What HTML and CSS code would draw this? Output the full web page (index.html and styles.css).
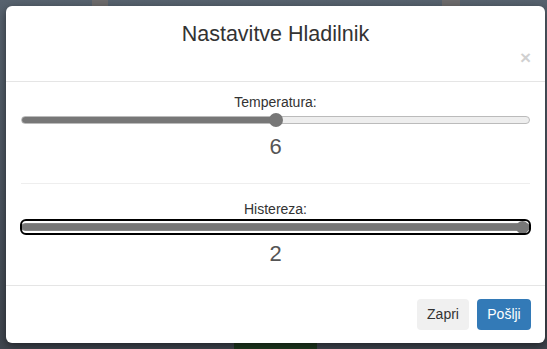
FILE: index.html
```html
<!DOCTYPE html>
<html lang="sl">

<head>
    <meta charset="UTF-8">
    <meta name="viewport" content="width=device-width, initial-scale=1.0">
    <title>Nastavitve Hladilnik</title>
    <link rel="stylesheet" href="styles.css">
</head>

<body>
    <div class="backdrop">
        <span class="patch patch-a"></span>
        <span class="patch patch-b"></span>
        <span class="patch patch-c"></span>
    </div>
    <div class="modal">
        <div class="modal-header">
            <h4 class="modal-title">Nastavitve Hladilnik</h4>
            <button class="close" type="button">&times;</button>
        </div>
        <div class="modal-body">
            <label class="field-label" for="temp">Temperatura:</label>
            <input class="slider" id="temp" type="range" min="0" max="12" value="6" style="--fill: 50%">
            <div class="field-value">6</div>
            <hr class="divider">
            <label class="field-label" for="hyst">Histereza:</label>
            <input class="slider focused" id="hyst" type="range" min="0" max="2" value="2" style="--fill: 100%">
            <div class="field-value">2</div>
        </div>
        <div class="modal-footer">
            <button class="btn btn-default" type="button">Zapri</button>
            <button class="btn btn-primary" type="button">Pošlji</button>
        </div>
    </div>
</body>

</html>
```

FILE: styles.css
```css
* {
    padding: 0;
    margin: 0;
    box-sizing: border-box;
}

body {
    width: 547px;
    height: 349px;
    overflow: hidden;
    background: linear-gradient(#57626e, #4a535e 60%, #40464f);
    font-family: "Liberation Sans", Arial, sans-serif;
    font-size: 14px;
    color: #333;
    position: relative;
    padding: 6px 2px 0 6px;
}

.backdrop .patch {
    position: absolute;
    display: block;
}

.patch-a {
    left: 92px;
    top: 0;
    width: 16px;
    height: 6px;
    background: #6d6b6c;
}

.patch-b {
    left: 442px;
    top: 0;
    width: 18px;
    height: 6px;
    background: #6d6b6c;
}

.patch-c {
    left: 234px;
    bottom: 0;
    width: 83px;
    height: 6px;
    background: #1f3a20;
}

.modal {
    position: relative;
    width: 539px;
    height: 337px;
    background: #fff;
    border-radius: 6px;
    box-shadow: 0 3px 9px rgba(0, 0, 0, .5);
    display: flex;
    flex-direction: column;
}

.modal-header {
    height: 76px;
    padding: 17px 15px 0;
    border-bottom: 1px solid #e5e5e5;
    display: flex;
    flex-direction: column;
}

.modal-title {
    font-size: 21.5px;
    font-weight: normal;
    line-height: 1.1;
    text-align: center;
    color: #333;
}

.close {
    align-self: flex-end;
    margin-top: 1px;
    margin-right: -1px;
    border: 0;
    background: none;
    font-family: "Liberation Sans", Arial, sans-serif;
    font-size: 19px;
    font-weight: bold;
    line-height: 20px;
    color: #000;
    opacity: .18;
}

.modal-body {
    flex: 1;
    padding: 10px 15px 0;
}

.field-label {
    display: block;
    line-height: 20px;
    text-align: center;
}

.slider {
    display: block;
    width: 100%;
    height: 14px;
    margin-top: 1px;
    -webkit-appearance: none;
    appearance: none;
    background: none;
    border-radius: 5px;
}

.slider::-webkit-slider-runnable-track {
    height: 8px;
    border: 1px solid #bbb;
    border-radius: 4px;
    background: linear-gradient(to right, #777 var(--fill), #eee var(--fill));
}

.slider::-webkit-slider-thumb {
    -webkit-appearance: none;
    width: 14px;
    height: 14px;
    margin-top: -4px;
    border-radius: 50%;
    background: #777;
}

.slider.focused {
    outline: 2px solid #000;
    outline-offset: -1px;
}

.slider.focused::-webkit-slider-runnable-track {
    border-color: #888;
}

.slider.focused::-webkit-slider-thumb {
    width: 13px;
    height: 13px;
    margin-top: -3.5px;
}

.field-value {
    margin-top: 8px;
    font-size: 22px;
    line-height: 24px;
    text-align: center;
    color: #555;
}

.divider {
    margin: 24px 0 15px;
    border: 0;
    border-top: 1px solid #eee;
}

.modal-footer {
    height: 58px;
    padding: 13px 14px 0;
    border-top: 1px solid #e5e5e5;
    display: flex;
    justify-content: flex-end;
    gap: 8px;
}

.btn {
    height: 31px;
    padding: 0 10px;
    border: 0;
    border-radius: 4px;
    font-family: "Liberation Sans", Arial, sans-serif;
    font-size: 14px;
    line-height: 31px;
}

.btn-default {
    width: 52px;
    background: #f0f0f0;
    color: #333;
}

.btn-primary {
    width: 54px;
    background: #337ab7;
    color: #fff;
}
```
